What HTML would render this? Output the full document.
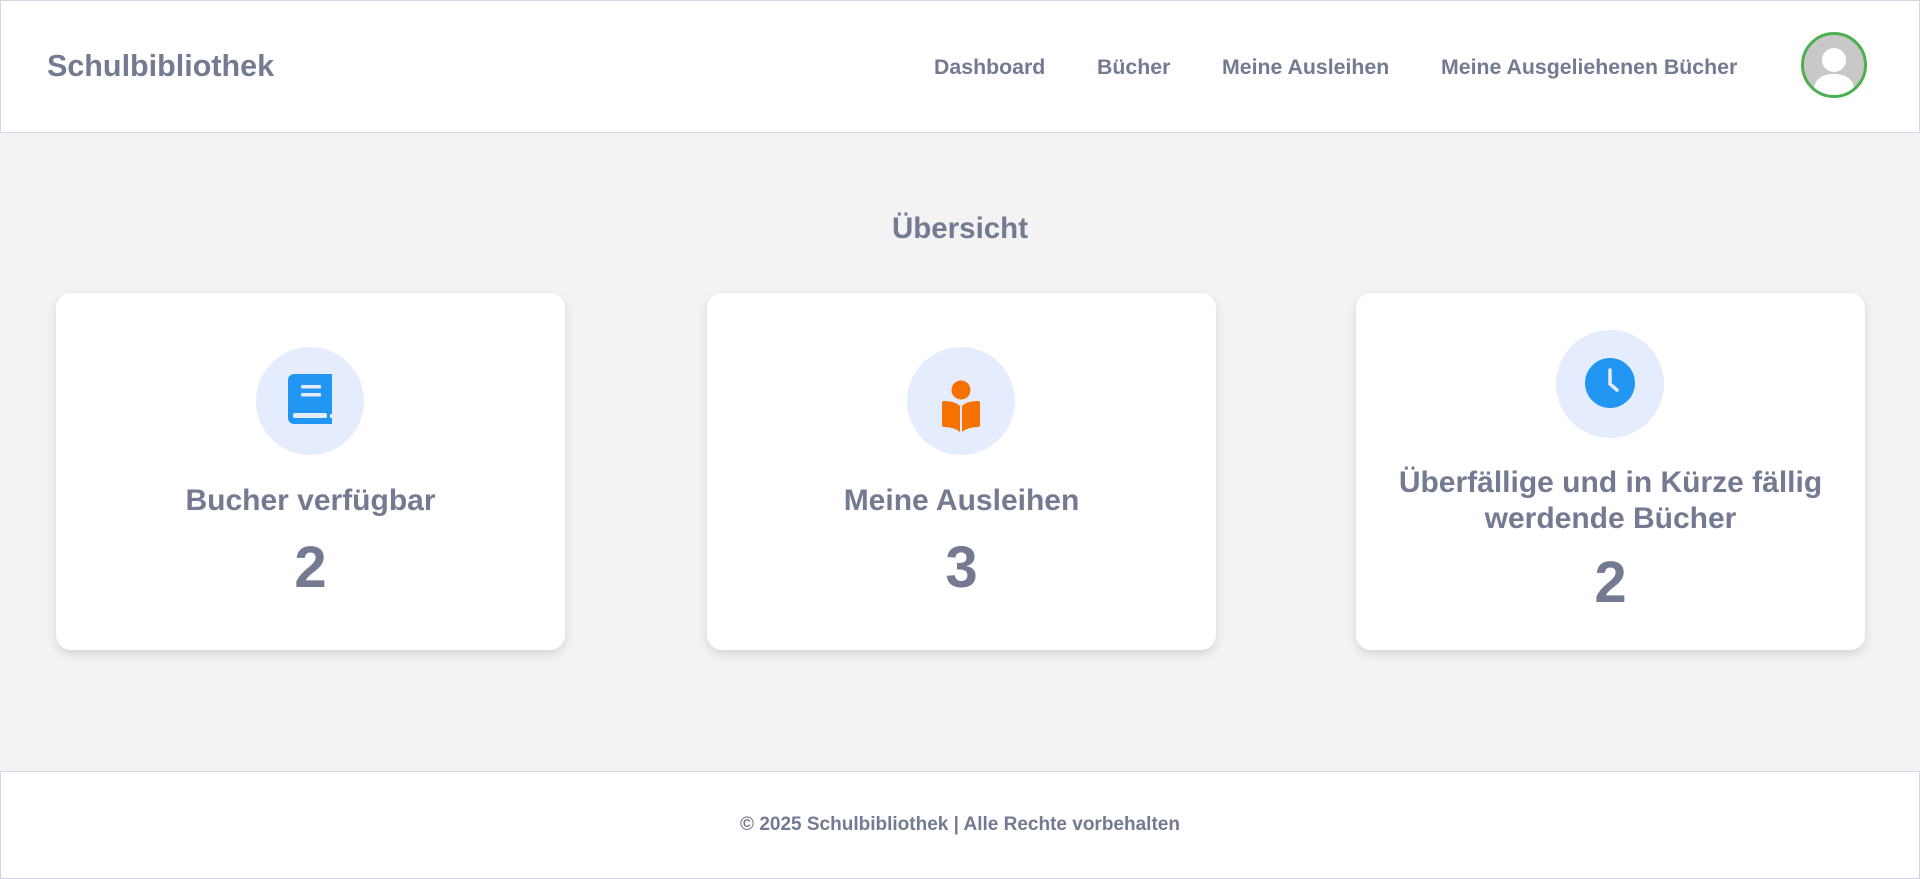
<!DOCTYPE html>
<html><head><meta charset="utf-8"><style>
*{margin:0;padding:0;box-sizing:border-box}
body{width:1920px;height:879px;background:#f3f3f3;font-family:"Liberation Sans",Arial,sans-serif;font-weight:bold;color:#737a91;position:relative;overflow:hidden}
header{position:absolute;left:0;top:0;width:1920px;height:133px;background:#fff;border:1px solid #d4d4e8}
.logo{position:absolute;left:46px;top:48px;font-size:30.5px}
nav a{position:absolute;top:54px;font-size:21.3px;color:#737a91;text-decoration:none;white-space:nowrap}
.av{position:absolute;left:1800px;top:31px;width:66px;height:66px;border-radius:50%;border:3px solid #4caf50;background:#c8c8c8;overflow:hidden}
h2{position:absolute;top:212px;width:1920px;text-align:center;font-size:29.5px}
.card{position:absolute;top:293px;width:509px;height:357px;background:#fff;border-radius:15px;box-shadow:0 4px 10px rgba(0,0,0,.12);text-align:center}
.ic{position:absolute;left:200px;width:108px;height:108px;border-radius:50%;background:#e5ecfd}
.ic svg{position:absolute;left:0;top:0}
.t{position:absolute;left:0;width:100%;font-size:30px;line-height:36px}
.n{position:absolute;left:0;width:100%;font-size:58px;line-height:60px}
footer{position:absolute;left:0;top:771px;width:1920px;height:108px;background:#fff;border:1px solid #d4d4e8;text-align:center;font-size:19px;padding-top:42px}
</style></head><body>
<header>
<div class="logo">Schulbibliothek</div>
<nav><a style="left:933px">Dashboard</a><a style="left:1096px">Bücher</a><a style="left:1221px">Meine Ausleihen</a><a style="left:1440px">Meine Ausgeliehenen Bücher</a></nav>
<div class="av"><svg width="60" height="60" viewBox="0 0 60 60"><circle cx="30" cy="25" r="12" fill="#fff"/><path d="M9 60 C9 44 18 39 30 39 C42 39 51 44 51 60Z" fill="#fff"/></svg></div>
</header>
<h2>Übersicht</h2>
<div class="card" style="left:56px">
<div class="ic" style="top:54px"><svg width="108" height="108" viewBox="0 0 108 108"><path d="M32 33 a6 6 0 0 1 6-6 h38 v40 h-2 v4 h2 v6 h-38 a6 6 0 0 1-6-6Z" fill="#2196f3"/><rect x="37" y="66" width="34" height="5" rx="2" fill="#e5ecfd"/><rect x="45" y="38" width="20" height="3.5" rx="1" fill="#e5ecfd"/><rect x="45" y="46" width="20" height="3.5" rx="1" fill="#e5ecfd"/></svg></div>
<div class="t" style="top:190px">Bucher verfügbar</div>
<div class="n" style="top:245px">2</div>
</div>
<div class="card" style="left:707px">
<div class="ic" style="top:54px"><svg width="108" height="108" viewBox="0 0 108 108"><circle cx="54" cy="43" r="9.5" fill="#f57200"/><path d="M35 56 q0-2 2-2 q11 0 16 5 v26 q-6-5-16-5 q-2 0-2-2Z" fill="#f57200"/><path d="M73 56 q0-2-2-2 q-11 0-16 5 v26 q6-5 16-5 q2 0 2-2Z" fill="#f57200"/></svg></div>
<div class="t" style="top:190px">Meine Ausleihen</div>
<div class="n" style="top:245px">3</div>
</div>
<div class="card" style="left:1356px">
<div class="ic" style="top:37px"><svg width="108" height="108" viewBox="0 0 108 108"><circle cx="54" cy="53" r="25" fill="#2196f3"/><path d="M54 40 v14 l7 6" stroke="#e5ecfd" stroke-width="3.5" fill="none" stroke-linecap="round"/></svg></div>
<div class="t" style="top:172px">Überfällige und in Kürze fällig<br>werdende Bücher</div>
<div class="n" style="top:260px">2</div>
</div>
<footer>© 2025 Schulbibliothek | Alle Rechte vorbehalten</footer>
</body></html>
